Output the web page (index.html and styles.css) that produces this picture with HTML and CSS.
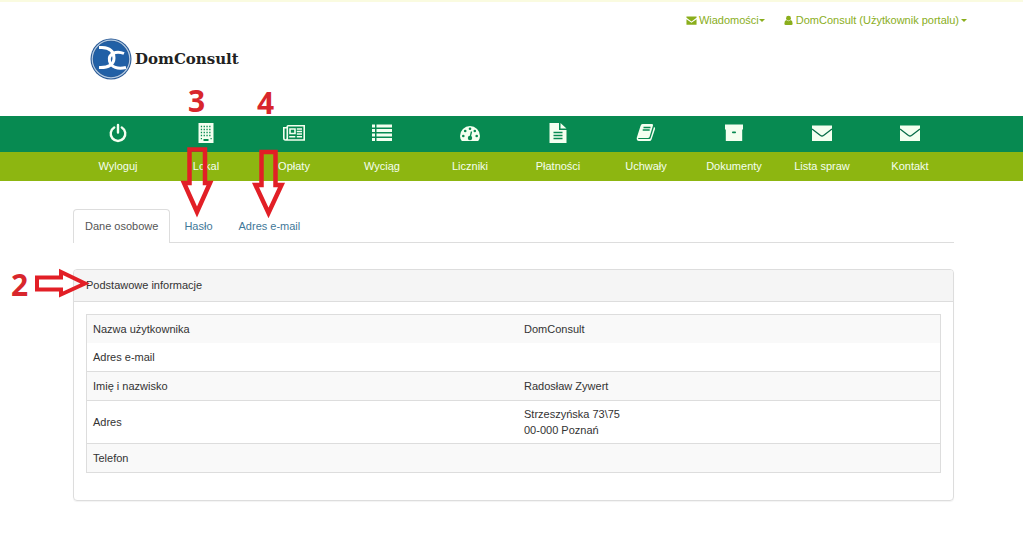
FILE: index.html
```html
<!DOCTYPE html>
<html lang="pl">
<head>
<meta charset="utf-8">
<title>DomConsult</title>
<link rel="stylesheet" href="styles.css">
</head>
<body>
<header class="header">
  <a class="logo" href="#">
    <svg class="logo-mark" viewBox="0 0 42 42" aria-hidden="true">
      <circle cx="21" cy="21" r="20.5" fill="#2a5a96"/>
      <circle cx="21" cy="21" r="18.8" fill="none" stroke="#b4cbe2" stroke-width="1.2"/>
      <circle cx="21" cy="21" r="17.5" fill="#2160a6"/>
      <g fill="none" stroke="#fff" stroke-width="3">
        <path d="M9 9.500H12C20 10 24 14 24 20C24 26 19 30 9 29.500"/>
        <path d="M34 15.500C26 12 18 16 19.500 23C21 29.500 28 31.500 36 29.500"/>
      </g>
    </svg>
    <span class="logo-name">DomConsult</span>
  </a>
  <div class="user-menu">
    <button class="menu-button" type="button">
      <svg class="icon-small" viewBox="0 0 12 12" aria-hidden="true"><path fill="currentColor" d="M1 1.500H11.500V3L6 7 .5 3V1.500ZM.5 4.500L6 8.500 11.500 4.500V10.500H.5Z"/></svg>
      <span>Wiadomości</span><span class="caret"></span>
    </button>
    <button class="menu-button" type="button">
      <svg class="icon-small" viewBox="0 0 12 12" aria-hidden="true"><circle cx="6" cy="3.500" r="2.700" fill="currentColor"/><path fill="currentColor" d="M3.500 5.500Q6 8 8.500 5.500Q10.500 6 10.500 9.500Q10.500 11 9 11H3Q1.500 11 1.500 9.500Q1.500 6 3.500 5.500Z"/></svg>
      <span>DomConsult (Użytkownik portalu)</span><span class="caret caret-spaced"></span>
    </button>
  </div>
</header>

<nav class="nav">
  <ul class="nav-list">
    <li><a class="nav-link" href="#"><span class="nav-icon"><svg viewBox="0 0 20 20"><path fill="none" stroke="currentColor" stroke-width="2.400" stroke-linecap="round" d="M6.200 4.400A7.300 7.300 0 1 0 13.800 4.400M10 2V9.500"/></svg></span><span class="nav-label">Wyloguj</span></a></li>
    <li><a class="nav-link" href="#"><span class="nav-icon"><svg viewBox="0 0 20 20"><path fill="currentColor" d="M2.500 0H17.500V20H2.500Z"/><path stroke="#078a51" stroke-width="1.300" stroke-dasharray="1.300 1.500" d="M4.800 3.500H16M4.800 6.500H16M4.800 9.500H16M4.800 12.500H16"/><path fill="#078a51" d="M7.500 16H12.500V18H7.500ZM4.800 15H6V16.300H4.800ZM14.500 15H15.700V16.300H14.500Z"/></svg></span><span class="nav-label">Lokal</span></a></li>
    <li><a class="nav-link" href="#"><span class="nav-icon"><svg class="wide" viewBox="0 0 22 20"><path fill="none" stroke="currentColor" stroke-width="1.600" d="M4.300 2.800H21.200V17H2.500Q.8 17 .8 15V4.800H4M4.300 2.800V15Q4.300 17 2.500 17"/><path fill="none" stroke="currentColor" stroke-width="1.600" d="M7 6H12V10.500H7ZM13.800 6H19M13.800 8.500H19M13.800 11H19M6.200 13.800H12.300M13.800 13.800H19"/></svg></span><span class="nav-label">Opłaty</span></a></li>
    <li><a class="nav-link" href="#"><span class="nav-icon"><svg viewBox="0 0 20 20"><path fill="currentColor" d="M0 1.500H3V4.500H0ZM4.500 1.500H20V4.500H4.500ZM0 6H3V9H0ZM4.500 6H20V9H4.500ZM0 10.500H3V13.500H0ZM4.500 10.500H20V13.500H4.500ZM0 15H3V18H0ZM4.500 15H20V18H4.500Z"/></svg></span><span class="nav-label">Wyciąg</span></a></li>
    <li><a class="nav-link" href="#"><span class="nav-icon"><svg viewBox="0 0 20 20"><path fill="currentColor" d="M1.800 18Q0 15.500 0 13A10 10 0 0 1 20 13Q20 15.500 18.200 18Z"/><g fill="#078a51"><circle cx="3.300" cy="13" r="1.300"/><circle cx="5.200" cy="8" r="1.300"/><circle cx="10" cy="5.800" r="1.300"/><circle cx="14.800" cy="8" r="1.300"/><circle cx="16.700" cy="13" r="1.300"/><circle cx="10" cy="15" r="2.200"/></g><path stroke="#078a51" stroke-width="1.300" d="M10 15L11.500 8.500"/></svg></span><span class="nav-label">Liczniki</span></a></li>
    <li><a class="nav-link" href="#"><span class="nav-icon"><svg viewBox="0 0 20 20"><path fill="currentColor" d="M1.500 0H11V7H18.500V20H1.500ZM12.500 0L18.500 5.500H12.500Z"/><path stroke="#078a51" stroke-width="1.500" d="M5.500 9.500H14.500M5.500 12.500H14.500M5.500 15.500H14.500"/></svg></span><span class="nav-label">Płatności</span></a></li>
    <li><a class="nav-link" href="#"><span class="nav-icon"><svg viewBox="0 0 20 20"><path fill="currentColor" d="M6.500 1H16Q17.500 1 17 2.600L13.500 14Q13 15 11.800 15H3Q2 15 2 16H13.500Q14.200 16 14.600 15L18 4Q19.500 4.500 19 6L15.500 16.500Q15 18 13.500 18H3Q.5 18 .7 15L4.500 3Q5 1 6.500 1Z"/><path stroke="#078a51" stroke-width="1.300" d="M7.500 4.500H14.500M6.700 7H13.700"/></svg></span><span class="nav-label">Uchwały</span></a></li>
    <li><a class="nav-link" href="#"><span class="nav-icon"><svg viewBox="0 0 20 20"><path fill="currentColor" d="M1 1.500H19V6.500H1ZM1.800 6H18.200V18H1.800Z"/><rect x="8" y="8.500" width="4" height="1.800" rx=".8" fill="#078a51"/></svg></span><span class="nav-label">Dokumenty</span></a></li>
    <li><a class="nav-link" href="#"><span class="nav-icon"><svg viewBox="0 0 20 20"><path fill="currentColor" d="M0 2.500H20V18H0Z"/><path fill="none" stroke="#066b46" stroke-width="1.300" d="M0 6L8.500 12.500Q10 13.500 11.500 12.500L20 6"/></svg></span><span class="nav-label">Lista spraw</span></a></li>
    <li><a class="nav-link" href="#"><span class="nav-icon"><svg viewBox="0 0 20 20"><path fill="currentColor" d="M0 2.500H20V18H0Z"/><path fill="none" stroke="#066b46" stroke-width="1.300" d="M0 6L8.500 12.500Q10 13.500 11.500 12.500L20 6"/></svg></span><span class="nav-label">Kontakt</span></a></li>
  </ul>
</nav>

<main class="content">
  <div class="tabs">
    <a class="tab tab-active" href="#">Dane osobowe</a>
    <a class="tab" href="#">Hasło</a>
    <a class="tab" href="#">Adres e-mail</a>
  </div>
  <section class="panel">
    <h1 class="panel-heading">Podstawowe informacje</h1>
    <div class="panel-body">
      <table class="details">
        <tbody>
          <tr class="plain"><th scope="row">Nazwa użytkownika</th><td>DomConsult</td></tr>
          <tr class="plain"><th scope="row">Adres e-mail</th><td></td></tr>
          <tr><th scope="row">Imię i nazwisko</th><td>Radosław Zywert</td></tr>
          <tr><th scope="row">Adres</th><td>Strzeszyńska 73\75<br>00-000 Poznań</td></tr>
          <tr><th scope="row">Telefon</th><td></td></tr>
        </tbody>
      </table>
    </div>
  </section>
</main>

<svg class="arrows" width="300" height="310" viewBox="0 0 300 310" aria-hidden="true">
  <g fill="none" stroke="#e21f26">
    <path stroke-width="4.500" d="M189.500 149.500H205V183H210L197 212L184 183H189.500Z"/>
    <path stroke-width="4.500" d="M261.500 152H275.500V185H281.500L268.500 213L255.500 185H261.500Z"/>
    <path stroke-width="4" d="M37 277.500H61V272L85 283.500L61 294.500V289.500H37Z"/>
  </g>
</svg>
<span class="step step-two">2</span>
<span class="step step-three">3</span>
<span class="step step-four">4</span>
</body>
</html>
```
FILE: styles.css
```css
* { box-sizing: border-box; }

body {
  position: relative;
  margin: 0;
  background: #fff;
  color: #333;
  font: 11px/15px "Liberation Sans", Arial, sans-serif;
}

a { text-decoration: none; }

.header {
  display: flex;
  justify-content: space-between;
  align-items: flex-start;
  min-height: 116px;
  padding: 11px 56px 0 90px;
  border-top: 2px solid #fafbe0;
}

.logo {
  display: flex;
  align-items: center;
  gap: 3px;
  padding-top: 25px;
  color: #222;
}

.logo-mark { width: 42px; height: 42px; }

.logo-name { font: bold 15px/20px "DejaVu Serif", serif; }

.user-menu { display: flex; gap: 18px; }

.menu-button {
  display: flex;
  align-items: center;
  padding: 0;
  border: 0;
  background: none;
  color: #8aae1c;
  font: inherit;
}

.icon-small { width: 11px; height: 11px; margin-right: 2px; }

.caret {
  border: 3px solid transparent;
  border-top-color: currentColor;
  border-bottom: 0;
}

.caret-spaced { margin-left: 2px; }

.nav {
  padding: 0 69px 0 74px;
  background: linear-gradient(#078a51 36px, #8db611 36px);
}

.nav-list {
  display: grid;
  grid-template-columns: repeat(10, 1fr);
  margin: 0;
  padding: 0;
  list-style: none;
}

.nav-link {
  display: flex;
  flex-direction: column;
  color: #f4fff0;
  text-align: center;
}

.nav-icon {
  display: flex;
  align-items: center;
  justify-content: center;
  height: 34px;
}

.nav-icon svg { width: 20px; height: 20px; }
.nav-icon .wide { width: 22px; }

.nav-label { padding: 9px 0 7px; }

.content { padding: 28px 69px 58px 73px; }

.tabs {
  display: flex;
  gap: 2px;
  border-bottom: 1px solid #ddd;
}

.tab {
  padding: 9px 11px 8px;
  border: 1px solid transparent;
  border-bottom: 0;
  color: #3f7899;
}

.tab-active {
  margin-bottom: -1px;
  border-color: #ddd;
  border-radius: 4px 4px 0 0;
  background: #fff;
  color: #555;
}

.panel {
  margin-top: 26px;
  border: 1px solid #ddd;
  border-radius: 4px;
  box-shadow: 0 1px 1px rgba(0, 0, 0, 0.05);
}

.panel-heading {
  margin: 0;
  padding: 8px 12px;
  border-bottom: 1px solid #ddd;
  border-radius: 3px 3px 0 0;
  background: #f5f5f5;
  font: inherit;
}

.panel-body { padding: 12px 12px 27px; }

.details {
  width: 100%;
  border: 1px solid #ddd;
  border-spacing: 0;
  table-layout: fixed;
  line-height: 16px;
}

.details th,
.details td {
  height: 29px;
  padding: 5px 6px;
  border-top: 1px solid #ddd;
  font-weight: normal;
  text-align: left;
  vertical-align: middle;
}

.details th { width: 431px; }

.details .plain > * {
  height: 28px;
  border-top: 0;
}

.details tr:nth-child(odd) { background: #f9f9f9; }

.arrows {
  position: absolute;
  top: 0;
  left: 0;
  pointer-events: none;
}

.step {
  position: absolute;
  color: #d8262c;
  font: bold 30px/30px "Open Sans", sans-serif;
}

.step-two { top: 270px; left: 11px; }
.step-three { top: 86px; left: 188px; }
.step-four { top: 88px; left: 257px; }
```
